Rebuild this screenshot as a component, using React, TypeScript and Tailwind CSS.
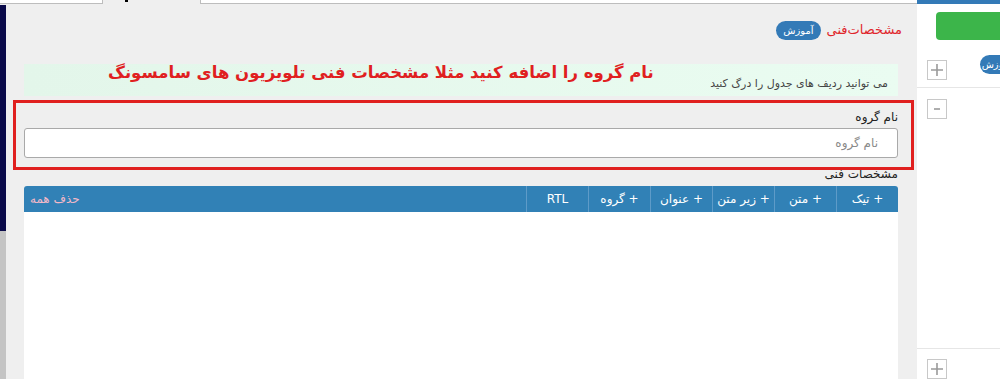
import React from "react";

const columns = ["+ تیک", "+ متن", "+ زیر متن", "+ عنوان", "+ گروه", "RTL"];

function SquareButton({sign}: { sign: "+" | "-" }) {
    return (
        <div className="w-[20px] h-[20px] border border-[#c8c8c8] bg-white flex items-center justify-center">
            {sign === "+" ? (
                <svg width="14" height="14" viewBox="0 0 14 14">
                    <path d="M7 1v12M1 7h12" stroke="#9a9a9a" strokeWidth="1.6"/>
                </svg>
            ) : (
                <svg width="14" height="14" viewBox="0 0 14 14">
                    <path d="M4 7h6" stroke="#9a9a9a" strokeWidth="1.6"/>
                </svg>
            )}
        </div>
    );
}

export default function App() {
    return (
        <div
            className="relative w-[1000px] h-[379px] overflow-hidden bg-[#efefef] flex flex-col"
            style={{fontFamily: '"DejaVu Sans", "Noto Sans", sans-serif'}}
        >
            {/* top tab strip */}
            <div className="h-[4px] flex shrink-0">
                <div className="w-[103px] bg-white border-b border-r border-[#bdbdbd]"/>
                <div className="w-[97px] relative">
                    <div className="absolute left-[22px] top-0 w-[3px] h-[2px] bg-black"/>
                </div>
                <div className="w-[717px] bg-white border-b border-l border-[#bdbdbd]"/>
                <div className="flex-1 bg-[#337ab7]"/>
            </div>

            <div className="flex flex-1 min-h-0">
                {/* left edge */}
                <div className="w-[6px] flex flex-col pt-[1px]">
                    <div className="h-[226px] bg-[#0a0a4a]"/>
                    <div className="flex-1 bg-[#c4c4c4]"/>
                </div>

                {/* main */}
                <div dir="rtl" className="w-[911px] pr-[19px] pl-[18px] flex flex-col">
                    <div className="flex items-center gap-[6px] h-[36px] mt-[8px] mr-[-4px]">
                        <span className="text-[13px] text-[#e0262b]">مشخصات‌فنی</span>
                        <span className="bg-[#337ab7] text-white text-[10px] rounded-full px-[7px] h-[19px] flex items-center">آموزش</span>
                    </div>

                    <div className="mt-[16px] h-[32px] bg-gradient-to-l from-[#eafcf1] to-[#e3f6ea] flex items-end pb-[4px] pr-[10px]">
                        <span className="text-[11px] text-[#444]">می توانید ردیف های جدول را درگ کنید</span>
                    </div>

                    <div className="mt-[13px] text-[12px] text-[#222] leading-[16px]">نام گروه</div>
                    <div className="mt-[3px] h-[30px] bg-white border border-[#a9a9a9] rounded-[3px] flex items-center pr-[19px]">
                        <span className="text-[12px] text-[#8a8a8a]">نام گروه</span>
                    </div>

                    <div className="mt-[8px] text-[12px] text-[#222] leading-[16px]">مشخصات فنی</div>

                    <div className="mt-[4px] h-[26px] bg-[#3181b6] rounded-t-[3px] flex text-white text-[12px]">
                        {columns.map((c, i) => (
                            <div
                                key={i}
                                className="w-[62px] flex items-center justify-center border-l border-[#5e9bc8]"
                            >
                                {c}
                            </div>
                        ))}
                        <div className="flex-1 flex items-center justify-end pl-[6px]">
                            <span className="text-[#f5b9c8]">حذف همه</span>
                        </div>
                    </div>
                    <div className="flex-1 bg-white"/>
                </div>

                {/* right column */}
                <div className="flex-1 bg-white flex flex-col">
                    <div className="h-[85px] border-b border-[#e6e6e6] relative">
                        <div className="absolute left-[19px] top-[8px] w-[80px] h-[28px] rounded-[4px] bg-[#3cb54a]"/>
                        <div dir="rtl" className="absolute left-[63px] top-[51px] w-[40px] h-[19px] rounded-full bg-[#337ab7] text-white text-[10px] flex items-center pr-[8px]">آموزش</div>
                        <div className="absolute left-[10px] top-[56px]">
                            <SquareButton sign="+"/>
                        </div>
                    </div>
                    <div className="h-[263px] border-b border-[#e6e6e6] pt-[11px] pl-[10px]">
                        <SquareButton sign="-"/>
                    </div>
                    <div className="pt-[10px] pl-[10px]">
                        <SquareButton sign="+"/>
                    </div>
                </div>
            </div>

            {/* annotation layer */}
            <div
                dir="rtl"
                className="absolute left-[108px] top-[60px] text-[16.5px] font-bold text-[#e0201f] leading-[26px]"
            >
                نام گروه را اضافه کنید مثلا مشخصات فنی تلویزیون های سامسونگ
            </div>
            <div className="absolute left-[13px] top-[100px] w-[901px] h-[70px] border-[3px] border-[#e0201f]"/>
        </div>
    );
}
